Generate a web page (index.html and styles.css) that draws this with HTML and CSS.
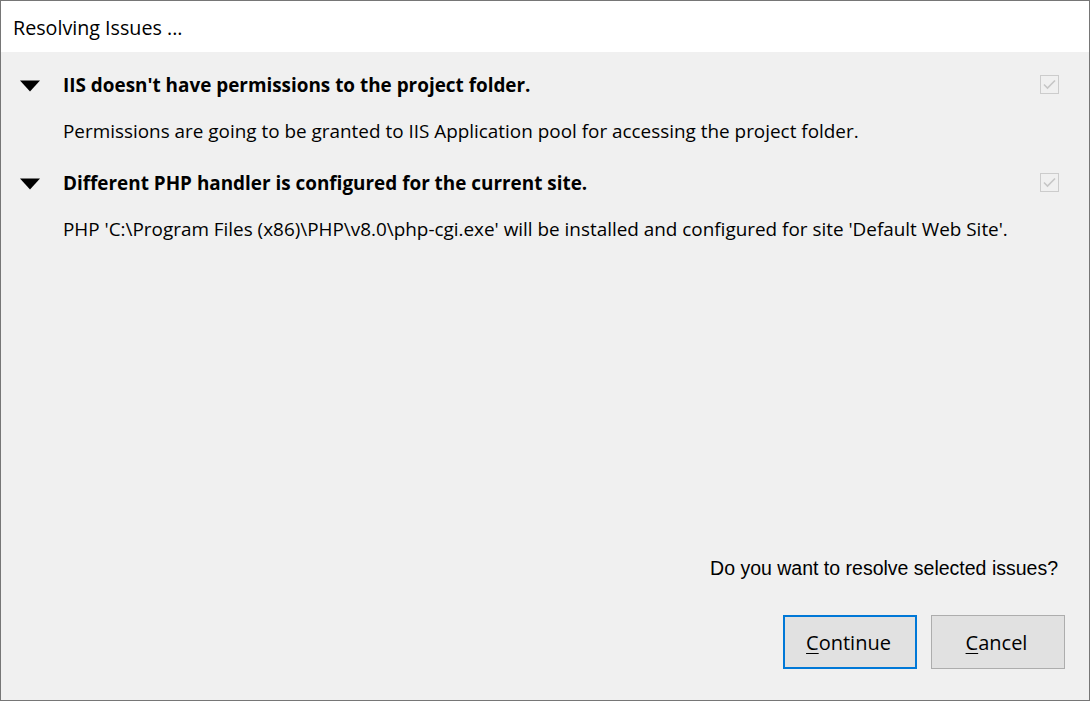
FILE: index.html
```html
<!DOCTYPE html>
<html>
<head>
<meta charset="utf-8">
<link rel="stylesheet" href="styles.css">
</head>
<body>
<div class="window">
  <div class="titlebar">Resolving Issues ...</div>
  <div class="content">
    <div class="issues">
      <div class="issue">
        <div class="issue-head">
          <svg class="caret" width="20" height="12" viewBox="0 0 20 12"><polygon points="0,0.5 20,0.5 10,11.5" fill="#000"/></svg>
          <span class="issue-title">IIS doesn't have permissions to the project folder.</span>
          <svg class="check" width="19" height="19" viewBox="0 0 19 19"><rect x="0.5" y="0.5" width="18" height="18" fill="#f0f0f0" stroke="#cccccc"/><polyline points="4,9.5 7.5,13 15,5.5" fill="none" stroke="#c6c6c6" stroke-width="1.6"/></svg>
        </div>
        <div class="issue-desc">Permissions are going to be granted to IIS Application pool for accessing the project folder.</div>
      </div>
      <div class="issue">
        <div class="issue-head">
          <svg class="caret" width="20" height="12" viewBox="0 0 20 12"><polygon points="0,0.5 20,0.5 10,11.5" fill="#000"/></svg>
          <span class="issue-title">Different PHP handler is configured for the current site.</span>
          <svg class="check" width="19" height="19" viewBox="0 0 19 19"><rect x="0.5" y="0.5" width="18" height="18" fill="#f0f0f0" stroke="#cccccc"/><polyline points="4,9.5 7.5,13 15,5.5" fill="none" stroke="#c6c6c6" stroke-width="1.6"/></svg>
        </div>
        <div class="issue-desc">PHP 'C:\Program Files (x86)\PHP\v8.0\php-cgi.exe' will be installed and configured for site 'Default Web Site'.</div>
      </div>
    </div>
    <div class="question">Do you want to resolve selected issues?</div>
    <div class="buttons">
      <button class="btn btn-default"><u>C</u>ontinue</button>
      <button class="btn"><u>C</u>ancel</button>
    </div>
  </div>
</div>
</body>
</html>
```
FILE: styles.css
```css
html, body {
  margin: 0;
  padding: 0;
  width: 1090px;
  height: 701px;
  overflow: hidden;
}
.window {
  box-sizing: border-box;
  width: 1090px;
  height: 701px;
  border: 1px solid #767676;
  display: flex;
  flex-direction: column;
  background: #f0f0f0;
  font-family: "Open Sans", "Noto Sans", sans-serif;
  color: #000;
}
.titlebar {
  height: 51px;
  background: #ffffff;
  box-sizing: border-box;
  padding-left: 12px;
  font-size: 19.7px;
  line-height: 53px;
}
.content {
  flex: 1;
  display: flex;
  flex-direction: column;
}
.issues {
  flex: 1;
  display: flex;
  flex-direction: column;
  padding-top: 18px;
}
.issue {
  margin-bottom: 22px;
}
.issue-head {
  display: flex;
  align-items: center;
  height: 30px;
  padding-left: 19px;
  padding-right: 30px;
}
.caret {
  flex: none;
  margin-right: 23px;
  margin-top: 1px;
}
.issue-title {
  flex: 1;
  font-weight: bold;
  font-size: 18.9px;
}
.check {
  flex: none;
  margin-top: -2px;
}
.issue-desc {
  margin-top: 16px;
  height: 30px;
  line-height: 30px;
  padding-left: 62px;
  font-size: 18.9px;
}
.question {
  font-family: "Liberation Sans", Arial, sans-serif;
  font-size: 19.5px;
  text-align: right;
  padding-right: 31px;
  height: 30px;
  line-height: 30px;
  margin-bottom: 32px;
}
.buttons {
  display: flex;
  justify-content: flex-end;
  gap: 14px;
  padding-right: 24px;
  padding-bottom: 31px;
}
.btn {
  box-sizing: border-box;
  width: 134px;
  height: 54px;
  background: #e1e1e1;
  border: 1px solid #adadad;
  font-family: "Open Sans", "Noto Sans", sans-serif;
  font-size: 20px;
  color: #000;
  padding: 0 3px 0 0;
  margin: 0;
}
.btn u {
  text-decoration-thickness: 1px;
  text-underline-offset: 3px;
}
.btn-default {
  border: 2px solid #0078d7;
}
```
